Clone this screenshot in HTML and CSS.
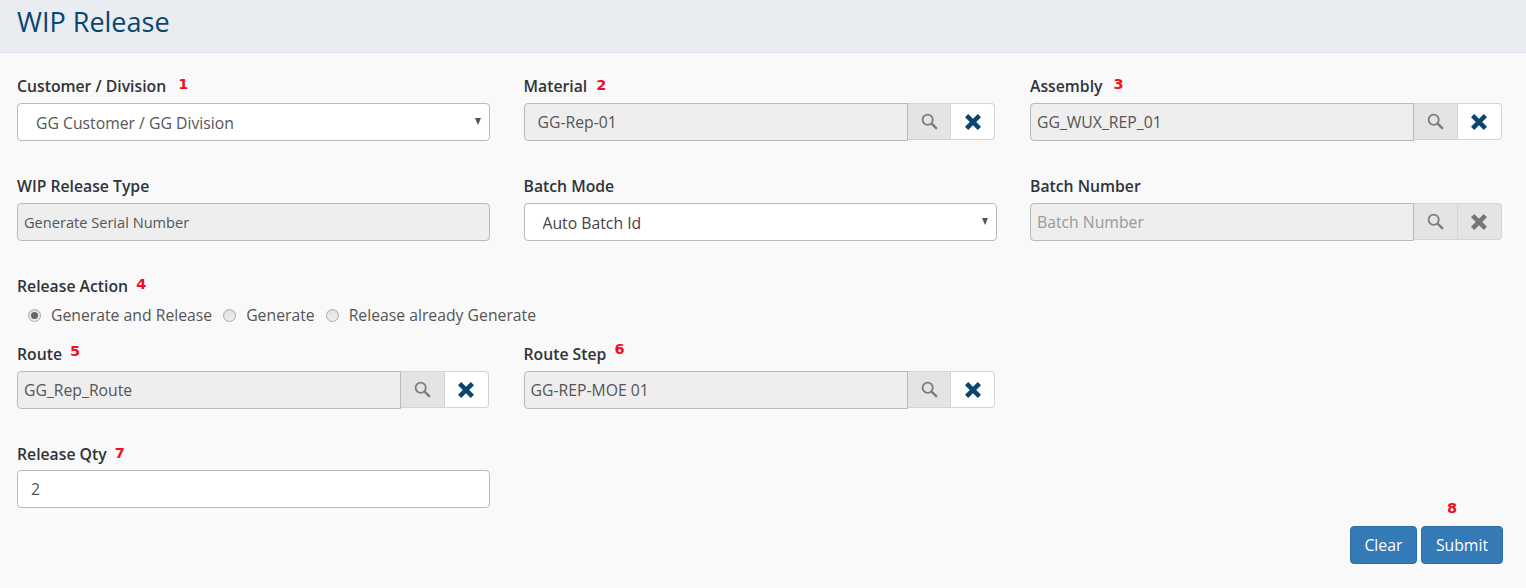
FILE: index.html
```html
<!DOCTYPE html>
<html lang="en">
<head>
    <meta charset="UTF-8">
    <meta name="viewport" content="width=device-width, initial-scale=1.0">
    <title>WIP Release</title>
    <link rel="stylesheet" href="styles.css">
</head>
<body>
    <svg class="sprite" width="0" height="0">
        <symbol id="icon-search" viewBox="0 0 16 16">
            <circle cx="6.3" cy="6.3" r="4.8" fill="none" stroke="currentColor" stroke-width="1.7"/>
            <path d="M10 10l5 5" fill="none" stroke="currentColor" stroke-width="2.2"/>
        </symbol>
        <symbol id="icon-remove" viewBox="0 0 16 16">
            <path d="M3.2 0L8 4.8 12.8 0 16 3.2 11.2 8 16 12.8 12.8 16 8 11.2 3.2 16 0 12.8 4.8 8 0 3.2z" fill="currentColor"/>
        </symbol>
    </svg>

    <h1 class="page-title">WIP Release</h1>

    <form class="form">
        <div class="row">
            <div class="field">
                <label class="field-label">Customer / Division <span class="step step-wide step-high">1</span></label>
                <div class="select-wrap">
                    <select class="control select"><option>GG Customer / GG Division</option></select>
                </div>
            </div>
            <div class="field">
                <label class="field-label">Material <span class="step step-near">2</span></label>
                <div class="lookup">
                    <input class="control lookup-input lookup-input-wide" type="text" value="GG-Rep-01" readonly>
                    <button type="button" class="addon addon-search"><svg class="icon-search"><use href="#icon-search"/></svg></button>
                    <button type="button" class="addon addon-clear"><svg class="icon-remove"><use href="#icon-remove"/></svg></button>
                </div>
            </div>
            <div class="field">
                <label class="field-label">Assembly <span class="step step-high step-far">3</span></label>
                <div class="lookup">
                    <input class="control lookup-input" type="text" value="GG_WUX_REP_01" readonly>
                    <button type="button" class="addon addon-search"><svg class="icon-search"><use href="#icon-search"/></svg></button>
                    <button type="button" class="addon addon-clear"><svg class="icon-remove"><use href="#icon-remove"/></svg></button>
                </div>
            </div>
        </div>

        <div class="row">
            <div class="field">
                <label class="field-label">WIP Release Type</label>
                <input class="control control-readonly" type="text" value="Generate Serial Number" readonly>
            </div>
            <div class="field">
                <label class="field-label">Batch Mode</label>
                <div class="select-wrap">
                    <select class="control select select-dark"><option>Auto Batch Id</option></select>
                </div>
            </div>
            <div class="field">
                <label class="field-label">Batch Number</label>
                <div class="lookup">
                    <input class="control lookup-input" type="text" placeholder="Batch Number" readonly>
                    <button type="button" class="addon addon-search"><svg class="icon-search"><use href="#icon-search"/></svg></button>
                    <button type="button" class="addon addon-clear addon-disabled"><svg class="icon-remove"><use href="#icon-remove"/></svg></button>
                </div>
            </div>
        </div>

        <div class="release-action">
            <label class="field-label field-label-radios">Release Action <span class="step step-high">4</span></label>
            <div class="radios">
                <label class="radio"><input type="radio" name="action" checked disabled> Generate and Release</label>
                <label class="radio"><input type="radio" name="action" disabled> Generate</label>
                <label class="radio"><input type="radio" name="action" disabled> Release already Generate</label>
            </div>
        </div>

        <div class="row">
            <div class="field">
                <label class="field-label">Route <span class="step step-higher">5</span></label>
                <div class="lookup">
                    <input class="control lookup-input" type="text" value="GG_Rep_Route" readonly>
                    <button type="button" class="addon addon-search"><svg class="icon-search"><use href="#icon-search"/></svg></button>
                    <button type="button" class="addon addon-clear"><svg class="icon-remove"><use href="#icon-remove"/></svg></button>
                </div>
            </div>
            <div class="field">
                <label class="field-label">Route Step <span class="step step-highest">6</span></label>
                <div class="lookup">
                    <input class="control lookup-input" type="text" value="GG-REP-MOE 01" readonly>
                    <button type="button" class="addon addon-search"><svg class="icon-search"><use href="#icon-search"/></svg></button>
                    <button type="button" class="addon addon-clear"><svg class="icon-remove"><use href="#icon-remove"/></svg></button>
                </div>
            </div>
        </div>

        <div class="row">
            <div class="field">
                <label class="field-label field-label-tight">Release Qty <span class="step">7</span></label>
                <input class="control control-qty" type="text" value="2">
            </div>
        </div>

        <div class="actions">
            <button type="button" class="btn btn-clear">Clear</button>
            <div class="submit-wrap">
                <span class="step step-submit">8</span>
                <button type="submit" class="btn btn-submit">Submit</button>
            </div>
        </div>
    </form>
</body>
</html>
```

FILE: styles.css
```css
html, body {
    margin: 0;
    height: 100%;
}

body {
    background: #f9f9f9;
    color: #333;
    font-family: "Open Sans", "Noto Sans", sans-serif;
    font-size: 15.75px;
    overflow: hidden;
}

.sprite {
    display: block;
}

.page-title {
    margin: 0;
    height: 53px;
    padding-left: 17px;
    box-sizing: border-box;
    background: #e9ecf1;
    border-bottom: 1px solid #e1e4e8;
    color: #0a4570;
    font-size: 27px;
    font-weight: 400;
    line-height: 44px;
}

.form {
    padding: 22px 23px 0 17px;
}

.row {
    display: grid;
    grid-template-columns: repeat(3, 473px);
    column-gap: 33.5px;
    margin-bottom: 34px;
}

.field-label {
    display: block;
    height: 20px;
    margin-bottom: 8px;
    color: #2f333a;
    font-weight: 600;
    line-height: 22px;
}

.field-label-tight {
    margin-bottom: 7px;
}

.field-label-radios {
    margin-bottom: 10px;
}

.step {
    position: relative;
    top: -2px;
    margin-left: 4px;
    color: #f20d20;
    font-family: "DejaVu Sans", sans-serif;
    font-size: 14.5px;
    font-weight: 700;
}

.step-wide {
    margin-left: 8px;
}

.step-near {
    margin-left: 5px;
}

.step-far {
    margin-left: 7px;
}

.step-high {
    top: -3px;
}

.step-higher {
    top: -4px;
}

.step-highest {
    top: -6px;
}

.control {
    display: block;
    width: 100%;
    height: 38px;
    box-sizing: border-box;
    padding: 0 6px;
    background: #fff;
    border: 1px solid #b9b9b9;
    border-radius: 4px;
    color: #555;
    font-family: inherit;
    font-size: 15.75px;
}

.control-readonly,
.lookup-input {
    background: #eee;
}

.control-readonly {
    font-size: 14.6px;
}

.control-qty {
    padding-left: 13px;
}

.select-wrap {
    position: relative;
}

.select-wrap::after {
    content: "";
    position: absolute;
    top: 15px;
    right: 9px;
    border-left: 3.5px solid transparent;
    border-right: 3.5px solid transparent;
    border-top: 7px solid #555;
    pointer-events: none;
}

.select {
    appearance: none;
    padding: 2px 0 0 18px;
}

.select-dark {
    color: #444;
}

.lookup {
    display: flex;
    height: 38px;
    margin-right: 1.2px;
}

.lookup-input {
    flex: 1;
    min-width: 0;
    border-radius: 4px 0 0 4px;
}

.lookup-input-wide {
    padding-left: 13px;
}

.lookup-input::placeholder {
    color: #999;
    opacity: 1;
}

.addon {
    display: flex;
    align-items: center;
    justify-content: center;
    height: 37px;
    padding: 0;
    border: 1px solid #d4d4d4;
    border-left: 0;
    cursor: pointer;
}

.addon-search {
    width: 43.5px;
    background: #e4e4e4;
    color: #7c7c7c;
}

.addon-clear {
    width: 44px;
    background: #fff;
    border-radius: 0 4px 4px 0;
    color: #0a4570;
}

.addon-disabled {
    background: #e4e4e4;
    color: #757575;
}

.icon-search {
    width: 17px;
    height: 17px;
}

.icon-remove {
    width: 16px;
    height: 16px;
}

.release-action {
    height: 68px;
}

.radios {
    display: flex;
    align-items: center;
    column-gap: 11px;
    height: 20px;
    margin-left: 11px;
    color: #555;
}

.radio {
    display: flex;
    align-items: center;
    column-gap: 10px;
}

.radio input {
    appearance: none;
    display: grid;
    place-content: center;
    width: 13px;
    height: 13px;
    box-sizing: border-box;
    margin: 0;
    background: linear-gradient(#e0e0e0, #efefef);
    border: 1px solid #aaa;
    border-radius: 50%;
}

.radio input:checked::before {
    content: "";
    width: 7px;
    height: 7px;
    background: #666;
    border-radius: 50%;
}

.actions {
    display: flex;
    justify-content: flex-end;
    column-gap: 4px;
    margin-top: -16px;
}

.btn {
    height: 38px;
    padding: 0 14px;
    background: #337ab7;
    border: 1px solid #2e6da4;
    border-radius: 4px;
    color: #fff;
    font-family: inherit;
    font-size: 15.75px;
    cursor: pointer;
}

.btn-clear {
    padding: 0 13.5px;
}

.submit-wrap {
    position: relative;
}

.step-submit {
    position: absolute;
    top: -26px;
    left: 26px;
    margin: 0;
}
```
